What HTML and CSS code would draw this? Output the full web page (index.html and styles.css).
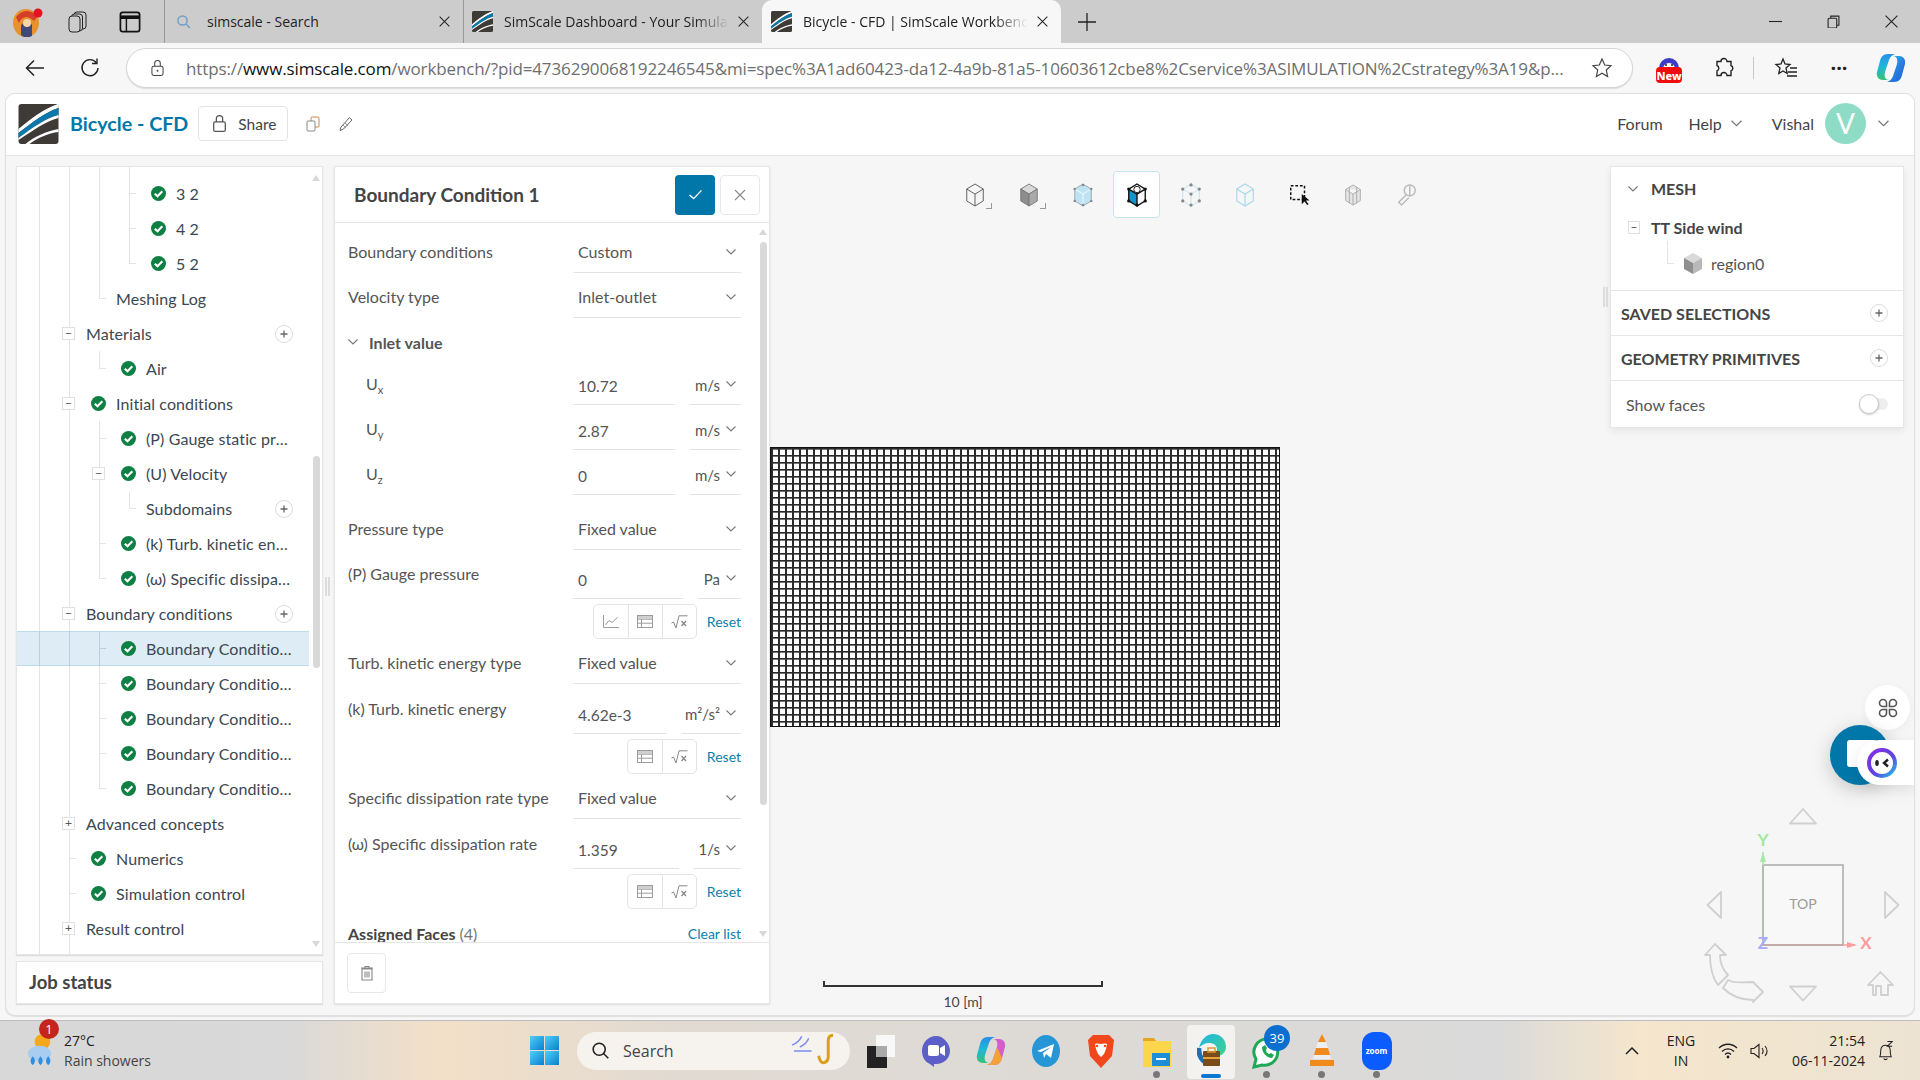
FILE: index.html
```html
<!DOCTYPE html>
<html lang="en">
<head>
<meta charset="utf-8">
<title>Bicycle - CFD | SimScale Workbench</title>
<link rel="stylesheet" href="styles.css">
</head>
<body>
<svg class="defs" aria-hidden="true">
  <defs>
    <linearGradient id="edgeG" x1="0" y1="0" x2="1" y2="1"><stop offset="0" stop-color="#1fb5e8"/><stop offset="1" stop-color="#3fd28b"/></linearGradient>
    <linearGradient id="copG" x1="0" y1="0" x2="1" y2="1"><stop offset="0" stop-color="#25c2d6"/><stop offset=".55" stop-color="#2a7de1"/><stop offset="1" stop-color="#1b5fd0"/></linearGradient>
    <linearGradient id="copG2" x1="0" y1="0" x2="0" y2="1"><stop offset="0" stop-color="#2a8fe8"/><stop offset=".5" stop-color="#1fb8d6"/><stop offset="1" stop-color="#38c172"/></linearGradient>
    <linearGradient id="ringG" x1="0" y1="0" x2="1" y2="1"><stop offset="0" stop-color="#8a2be2"/><stop offset=".6" stop-color="#5a48e0"/><stop offset="1" stop-color="#22c5e8"/></linearGradient>
    <linearGradient id="winG" x1="0" y1="0" x2="1" y2="1"><stop offset="0" stop-color="#4fd0f5"/><stop offset="1" stop-color="#0a7fd0"/></linearGradient>
    <symbol id="logo" viewBox="0 0 40 40">
      <rect width="40" height="40" rx="3" fill="#3e3a36"/>
      <path d="M40 0 C26 4 12 15 0 25 L0 29 C13 19 27 8 40 4Z" fill="#fff"/>
      <path d="M40 4 C27 8 13 19 0 29 L0 34 C14 24 27 14 40 11Z" fill="#0a78ab"/>
      <path d="M40 11 C27 14 14 24 0 34 L0 36 C14 27 27 17 40 14Z" fill="#fff"/>
      <path d="M40 25 C28 27 15 33 7 40 L11 40 C19 34 30 29 40 28Z" fill="#fff"/>
    </symbol>
    <symbol id="ck" viewBox="0 0 15 15">
      <circle cx="7.5" cy="7.5" r="7.5" fill="#0e8044"/>
      <path d="M3.8 7.8 6.5 10.3 11.3 5.3" fill="none" stroke="#fff" stroke-width="2.1"/>
    </symbol>
    <symbol id="chev" viewBox="0 0 10 6">
      <path d="M.5.5 5 5 9.5.5" fill="none" stroke="#777" stroke-width="1.1"/>
    </symbol>
    <symbol id="plusc" viewBox="0 0 18 18">
      <circle cx="9" cy="9" r="8.5" fill="#fff" stroke="#dcdcdc"/>
      <path d="M9 5.5v7M5.5 9h7" stroke="#666" stroke-width="1.3"/>
    </symbol>
    <symbol id="tbl" viewBox="0 0 16 13">
      <rect x=".5" y=".5" width="15" height="12" fill="none" stroke="#9c9c9c"/>
      <path d="M.5 4.2h15M.5 8.2h15M4.5.5v12" stroke="#9c9c9c"/>
      <rect x="1" y="1" width="14" height="3" fill="#cfcfcf"/>
    </symbol>
    <symbol id="sq" viewBox="0 0 17 14">
      <path d="M.5 8 2.5 7 5 13 8 .8H16.5" fill="none" stroke="#888"/>
      <path d="M10.5 6 15 11M15 6 10.5 11" stroke="#888" stroke-width="1.3"/>
    </symbol>
    <symbol id="xclose" viewBox="0 0 12 12">
      <path d="M.7.7 11.3 11.3M11.3.7.7 11.3" fill="none" stroke="#222" stroke-width="1.1"/>
    </symbol>
  </defs>
</svg>

<header class="tabstrip">
  <div class="strip-left">
    <svg class="avatar-profile" viewBox="0 0 31 30"><ellipse cx="14" cy="16" rx="13" ry="14" fill="#e8912f"/><path d="M4 10 C10 2 20 2 25 10 L22 14 C16 8 10 9 7 16Z" fill="#d63e2a"/><path d="M9 18 C12 14 18 14 20 18 L20 29 C16 31 12 31 9 28Z" fill="#3f4a7a"/><circle cx="15" cy="16" r="4" fill="#f6d3a8"/><circle cx="26" cy="6" r="4.5" fill="#e81123"/></svg>
    <svg class="strip-ico strip-ico-a" viewBox="0 0 22 24"><rect x="7" y="2" width="12" height="17" rx="3" fill="none" stroke="#222"/><rect x="4.5" y="4" width="11" height="17" rx="3" fill="#ccc" stroke="#222"/><rect x="2" y="6" width="11" height="16" rx="3" fill="#ccc" stroke="#222"/></svg>
    <svg class="strip-ico" viewBox="0 0 20 20"><rect x="2" y="2" width="16" height="16" rx="2" fill="none" stroke="#111" stroke-width="1.4"/><path d="M2 6h16" stroke="#111" stroke-width="3"/><path d="M7 6v12" stroke="#111" stroke-width="1.2"/></svg>
  </div>
  <div class="tab tab-search">
    <svg class="tab-ico" viewBox="0 0 16 16"><circle cx="6.5" cy="6.5" r="4.6" fill="none" stroke="#6f9fc9" stroke-width="1.5"/><path d="M10 10l4 4" stroke="#6f9fc9" stroke-width="1.5"/></svg>
    <span class="tab-text">simscale - Search</span>
    <svg class="tab-x"><use href="#xclose"/></svg>
  </div>
  <div class="tab tab-mid">
    <svg class="tab-logo"><use href="#logo"/></svg>
    <span class="tab-text tab-fade">SimScale Dashboard - Your Simulations</span>
    <svg class="tab-x"><use href="#xclose"/></svg>
  </div>
  <div class="tab tab-active">
    <svg class="tab-logo"><use href="#logo"/></svg>
    <span class="tab-text tab-fade">Bicycle - CFD | SimScale Workbench</span>
    <svg class="tab-x"><use href="#xclose"/></svg>
  </div>
  <svg class="tab-new" viewBox="0 0 20 20"><path d="M10 1v18M1 10h18" stroke="#222" stroke-width="1.3"/></svg>
  <div class="win-ctrl">
    <svg viewBox="0 0 12 12"><path d="M0 6h12" stroke="#222"/></svg>
    <svg viewBox="0 0 12 12"><rect x="1" y="3" width="8" height="9" rx="1" fill="none" stroke="#222"/><path d="M3.5 3V1h7.500v8.500H9" fill="none" stroke="#222"/></svg>
    <svg viewBox="0 0 12 12"><path d="M.5.5 11.500 11.500M11.500.5.500 11.500" stroke="#222"/></svg>
  </div>
</header>

<nav class="toolbar">
  <svg class="nav-ico nav-back" viewBox="0 0 22 22"><path d="M20 11H3M10 3.500 2.500 11 10 18.500" fill="none" stroke="#222" stroke-width="1.5"/></svg>
  <svg class="nav-ico nav-reload" viewBox="0 0 22 22"><path d="M17.500 6A8 8 0 1 0 19 11" fill="none" stroke="#222" stroke-width="1.400"/><path d="M18 1.500V6.500H13" fill="none" stroke="#222" stroke-width="1.400"/></svg>
  <div class="addr">
    <svg class="addr-lock" viewBox="0 0 14 18"><rect x="1" y="7" width="12" height="10" rx="2" fill="none" stroke="#444" stroke-width="1.100"/><path d="M4 7V4a3 3 0 0 1 6 0v3" fill="none" stroke="#444" stroke-width="1.100"/><circle cx="7" cy="12" r="1" fill="#444"/></svg>
    <span class="url"><span class="url-dim">https://</span><span class="url-host">www.simscale.com</span><span class="url-dim">/workbench/?pid=4736290068192246545&amp;mi=spec%3A1ad60423-da12-4a9b-81a5-10603612cbe8%2Cservice%3ASIMULATION%2Cstrategy%3A19&amp;p...</span></span>
    <svg class="addr-star" viewBox="0 0 22 22"><path d="M11 2l2.700 6 6.300.7-4.700 4.300 1.300 6.500L11 16.200 5.400 19.500l1.300-6.500L2 8.700 8.300 8z" fill="none" stroke="#444" stroke-width="1.200"/></svg>
  </div>
  <div class="ext-new">
    <svg viewBox="0 0 30 32"><path d="M5 16a10 10 0 0 1 20 0v2H5z" fill="#3b3bc8"/><path d="M9 17a6 6 0 0 1 12 0z" fill="#fff"/><circle cx="12" cy="13" r="1" fill="#222"/><circle cx="18" cy="13" r="1" fill="#222"/><rect x="2" y="15" width="26" height="16" rx="4" fill="#ee0c0c"/></svg>
    <span class="ext-new-label">New</span>
  </div>
  <svg class="nav-ico nav-puzzle" viewBox="0 0 22 22"><path d="M8 4.500a3 3 0 0 1 6 0H18v4a3 3 0 0 1 0 5.500v4.500H14a3 3 0 0 0-6 0H4V14a3 3 0 0 0 0-5.500v-4z" fill="none" stroke="#222" stroke-width="1.400"/></svg>
  <span class="nav-sep"></span>
  <svg class="nav-ico nav-fav" viewBox="0 0 24 22"><path d="M9 2l2 5 5 .5-4 3.500 1.200 5.500L9 14 4.800 16.500 6 11 2 7.500 7 7z" fill="none" stroke="#222" stroke-width="1.300"/><path d="M16 11h7M14 15h9M13 19h10" stroke="#222" stroke-width="1.300"/></svg>
  <span class="nav-dots">···</span>
  <svg class="nav-cop" viewBox="0 0 30 32"><path d="M12 2C7 2 5 5 4 9L1 20C0 25 3 28 7 28H13C9 28 8 24 9 20L13 8C14 5 16 3 19 2Z" fill="url(#copG2)"/><path d="M18 30C23 30 25 27 26 23L29 12C30 7 27 4 23 4H17C21 4 22 8 21 12L17 24C16 27 14 29 11 30Z" fill="url(#copG)"/></svg>
</nav>

<div class="app">
  <div class="app-head">
    <svg class="app-logo"><use href="#logo"/></svg>
    <span class="app-title">Bicycle - CFD</span>
    <button class="share">
      <svg class="share-lock" viewBox="0 0 14 18"><rect x="1.500" y="7.500" width="11" height="9" rx="1.500" fill="none" stroke="#555" stroke-width="1.200"/><path d="M4 7.500V4.500a3 3 0 0 1 6 0v3" fill="none" stroke="#555" stroke-width="1.200"/></svg>
      Share
    </button>
    <svg class="head-ico head-copy" viewBox="0 0 14 16"><rect x="5" y="1" width="8" height="10" rx="1" fill="#fff" stroke="#c98a4e"/><rect x="1" y="5" width="8" height="10" rx="1" fill="#fff" stroke="#888"/></svg>
    <svg class="head-ico head-pen" viewBox="0 0 14 16"><path d="M10.500 1.500 13 4 4.500 13 1 14.500 2 11z" fill="#fff" stroke="#666"/><path d="M4 9l3 3M6 7l3 3" stroke="#999"/></svg>
    <nav class="head-right">
      <span class="hlink hlink-forum">Forum</span>
      <span class="hlink hlink-help">Help</span>
      <svg class="hchev"><use href="#chev"/></svg>
      <span class="hlink hlink-user">Vishal</span>
      <span class="uavatar">V</span>
      <svg class="hchev hchev-end"><use href="#chev"/></svg>
    </nav>
  </div>

  <div class="work">
    <aside class="side">
      <div class="treebox">
        <div class="tree">
          <div class="row row-space"><i class="g"></i><i class="g"></i><i class="g"></i><i class="g"></i></div>
          <div class="row"><i class="g"></i><i class="g"></i><i class="g"></i><i class="g last tick"></i><svg class="ck"><use href="#ck"/></svg><span class="t">3 2</span></div>
          <div class="row"><i class="g"></i><i class="g"></i><i class="g"></i><i class="g last tick"></i><svg class="ck"><use href="#ck"/></svg><span class="t">4 2</span></div>
          <div class="row"><i class="g"></i><i class="g"></i><i class="g"></i><i class="g last end"></i><svg class="ck"><use href="#ck"/></svg><span class="t">5 2</span></div>
          <div class="row"><i class="g"></i><i class="g"></i><i class="g last end"></i><span class="t">Meshing Log</span></div>
          <div class="row"><i class="g"></i><i class="g last"><b class="box">−</b></i><span class="t">Materials</span><svg class="plusc"><use href="#plusc"/></svg></div>
          <div class="row"><i class="g"></i><i class="g"></i><i class="g last end"></i><svg class="ck"><use href="#ck"/></svg><span class="t">Air</span></div>
          <div class="row"><i class="g"></i><i class="g last"><b class="box">−</b></i><svg class="ck"><use href="#ck"/></svg><span class="t">Initial conditions</span></div>
          <div class="row"><i class="g"></i><i class="g"></i><i class="g last tick"></i><svg class="ck"><use href="#ck"/></svg><span class="t">(P) Gauge static pressure</span></div>
          <div class="row"><i class="g"></i><i class="g"></i><i class="g last"><b class="box">−</b></i><svg class="ck"><use href="#ck"/></svg><span class="t">(U) Velocity</span></div>
          <div class="row"><i class="g"></i><i class="g"></i><i class="g"></i><i class="g last end"></i><span class="t">Subdomains</span><svg class="plusc"><use href="#plusc"/></svg></div>
          <div class="row"><i class="g"></i><i class="g"></i><i class="g last tick"></i><svg class="ck"><use href="#ck"/></svg><span class="t">(k) Turb. kinetic energy</span></div>
          <div class="row"><i class="g"></i><i class="g"></i><i class="g last end"></i><svg class="ck"><use href="#ck"/></svg><span class="t">(ω) Specific dissipation rate</span></div>
          <div class="row"><i class="g"></i><i class="g last"><b class="box">−</b></i><span class="t">Boundary conditions</span><svg class="plusc"><use href="#plusc"/></svg></div>
          <div class="row row-sel"><i class="g"></i><i class="g"></i><i class="g last tick"></i><svg class="ck"><use href="#ck"/></svg><span class="t">Boundary Condition 1</span></div>
          <div class="row"><i class="g"></i><i class="g"></i><i class="g last tick"></i><svg class="ck"><use href="#ck"/></svg><span class="t">Boundary Condition 2</span></div>
          <div class="row"><i class="g"></i><i class="g"></i><i class="g last tick"></i><svg class="ck"><use href="#ck"/></svg><span class="t">Boundary Condition 3</span></div>
          <div class="row"><i class="g"></i><i class="g"></i><i class="g last tick"></i><svg class="ck"><use href="#ck"/></svg><span class="t">Boundary Condition 4</span></div>
          <div class="row"><i class="g"></i><i class="g"></i><i class="g last end"></i><svg class="ck"><use href="#ck"/></svg><span class="t">Boundary Condition 5</span></div>
          <div class="row"><i class="g"></i><i class="g last"><b class="box">+</b></i><span class="t">Advanced concepts</span></div>
          <div class="row"><i class="g"></i><i class="g last tick"></i><svg class="ck"><use href="#ck"/></svg><span class="t">Numerics</span></div>
          <div class="row"><i class="g"></i><i class="g last tick"></i><svg class="ck"><use href="#ck"/></svg><span class="t">Simulation control</span></div>
          <div class="row"><i class="g"></i><i class="g last"><b class="box">+</b></i><span class="t">Result control</span></div>
          <div class="row row-space"><i class="g"></i><i class="g"></i></div>
        </div>
        <span class="sb-arrow sb-up"></span>
        <span class="sb-thumb sb-thumb-tree"></span>
        <span class="sb-arrow sb-down"></span>
      </div>
      <div class="job">Job status</div>
    </aside>

    <span class="handle handle-left"></span>

    <section class="panel">
      <div class="panel-head">
        <h1 class="panel-title">Boundary Condition 1</h1>
        <button class="btn-ok"><svg viewBox="0 0 16 12"><path d="M1.500 6.500 6 10.500 14.500 1.500" fill="none" stroke="#fff" stroke-width="1.500"/></svg></button>
        <button class="btn-x"><svg viewBox="0 0 12 12"><path d="M1 1 11 11M11 1 1 11" stroke="#888" stroke-width="1.100"/></svg></button>
      </div>
      <div class="form">
        <div class="frow"><label class="lbl">Boundary conditions</label><div class="sel"><span>Custom</span><svg class="ch"><use href="#chev"/></svg></div></div>
        <div class="frow"><label class="lbl">Velocity type</label><div class="sel"><span>Inlet-outlet</span><svg class="ch"><use href="#chev"/></svg></div></div>
        <div class="fgroup"><svg class="ch ch-group"><use href="#chev"/></svg>Inlet value</div>
        <div class="frow"><label class="lbl lbl-sub">U<sub>x</sub></label><div class="val val-m"><span>10.72</span></div><div class="unit unit-m">m/s<svg class="ch"><use href="#chev"/></svg></div></div>
        <div class="frow"><label class="lbl lbl-sub">U<sub>y</sub></label><div class="val val-m"><span>2.87</span></div><div class="unit unit-m">m/s<svg class="ch"><use href="#chev"/></svg></div></div>
        <div class="frow frow-gap"><label class="lbl lbl-sub">U<sub>z</sub></label><div class="val val-m"><span>0</span></div><div class="unit unit-m">m/s<svg class="ch"><use href="#chev"/></svg></div></div>
        <div class="frow frow-gap15"><label class="lbl">Pressure type</label><div class="sel"><span>Fixed value</span><svg class="ch"><use href="#chev"/></svg></div></div>
        <div class="frow frow-tight"><label class="lbl lbl-top">(P) Gauge pressure</label><div class="val"><span>0</span></div><div class="unit unit-pa">Pa<svg class="ch"><use href="#chev"/></svg></div></div>
        <div class="tools">
          <div class="tgroup">
            <span class="tbtn"><svg class="tchart" viewBox="0 0 16 13"><path d="M.5 0v12.500H16" fill="none" stroke="#9c9c9c"/><path d="M2.500 10 6 5.500 9 7.500 14.500 2.500" fill="none" stroke="#9c9c9c"/></svg></span>
            <span class="tbtn"><svg class="ttbl"><use href="#tbl"/></svg></span>
            <span class="tbtn"><svg class="tsq"><use href="#sq"/></svg></span>
          </div>
          <a class="reset">Reset</a>
        </div>
        <div class="frow"><label class="lbl">Turb. kinetic energy type</label><div class="sel"><span>Fixed value</span><svg class="ch"><use href="#chev"/></svg></div></div>
        <div class="frow frow-tight frow-pre"><label class="lbl lbl-top">(k) Turb. kinetic energy</label><div class="val"><span>4.62e-3</span></div><div class="unit unit-k">m²/s²<svg class="ch"><use href="#chev"/></svg></div></div>
        <div class="tools">
          <div class="tgroup">
            <span class="tbtn"><svg class="ttbl"><use href="#tbl"/></svg></span>
            <span class="tbtn"><svg class="tsq"><use href="#sq"/></svg></span>
          </div>
          <a class="reset">Reset</a>
        </div>
        <div class="frow"><label class="lbl">Specific dissipation rate type</label><div class="sel"><span>Fixed value</span><svg class="ch"><use href="#chev"/></svg></div></div>
        <div class="frow frow-tight frow-pre"><label class="lbl lbl-top">(ω) Specific dissipation rate</label><div class="val"><span>1.359</span></div><div class="unit unit-w">1/s<svg class="ch"><use href="#chev"/></svg></div></div>
        <div class="tools">
          <div class="tgroup">
            <span class="tbtn"><svg class="ttbl"><use href="#tbl"/></svg></span>
            <span class="tbtn"><svg class="tsq"><use href="#sq"/></svg></span>
          </div>
          <a class="reset">Reset</a>
        </div>
        <div class="assigned"><b>Assigned Faces</b> <span class="count">(4)</span><a class="clear">Clear list</a></div>
        <span class="sb-arrow sb-up sb-up-form"></span>
        <span class="sb-thumb sb-thumb-form"></span>
        <span class="sb-arrow sb-down sb-down-form"></span>
      </div>
      <div class="panel-foot">
        <button class="trash"><svg viewBox="0 0 14 16"><path d="M2 4h10v11H2zM1 3h12M5 3V1.500h4V3M5 6.500v6M7 6.500v6M9 6.500v6" fill="none" stroke="#888" stroke-width="1.100"/></svg></button>
      </div>
    </section>

    <main class="view">
      <div class="vtools">
        <span class="vt vt-corner"><svg viewBox="0 0 24 26"><path d="M12 1 21 6.500V19.500L12 25 3 19.500V6.500Z M3 6.500 12 12 21 6.500M12 12V25" fill="none" stroke="#555"/></svg></span>
        <span class="vt vt-corner"><svg viewBox="0 0 24 26"><path d="M12 1 21 6.500 12 12 3 6.500Z" fill="#d8d8d8" stroke="#777"/><path d="M3 6.500 12 12V25L3 19.500Z" fill="#8d8d8d" stroke="#777"/><path d="M21 6.500 12 12V25L21 19.500Z" fill="#a9a9a9" stroke="#777"/></svg></span>
        <span class="vt"><svg viewBox="0 0 24 26"><path d="M12 1 21 6.500V19.500L12 25 3 19.500V6.500Z" fill="#bfe3f3" stroke="#9aa4aa"/><path d="M3 6.500 12 12 21 6.500M12 12V25" fill="none" stroke="#e8f5fb" stroke-width="1.300"/><g fill="#808a90"><circle cx="12" cy="2" r="1.400"/><circle cx="21" cy="6.500" r="1.400"/><circle cx="21" cy="19.500" r="1.400"/><circle cx="12" cy="24" r="1.400"/><circle cx="3" cy="19.500" r="1.400"/><circle cx="3" cy="6.500" r="1.400"/></g></svg></span>
        <span class="vt vt-on"><svg viewBox="0 0 24 26"><path d="M3 6.500 12 12V25L3 19.500Z" fill="#1493cc"/><path d="M12 1 21 6.500V19.500L12 25 3 19.500V6.500Z" fill="none" stroke="#111" stroke-width="1.500"/><path d="M3 6.500 12 12 21 6.500M12 12V25" fill="none" stroke="#111" stroke-width="1.500"/><circle cx="12" cy="7" r="3.500" fill="#fff" stroke="#111"/><g fill="#111"><circle cx="3" cy="6.500" r="1.800"/><circle cx="21" cy="6.500" r="1.800"/><circle cx="21" cy="19.500" r="1.800"/><circle cx="3" cy="19.500" r="1.800"/><circle cx="12" cy="24" r="1.800"/></g></svg></span>
        <span class="vt"><svg viewBox="0 0 24 26"><path d="M12 1 21 6.500V19.500L12 25 3 19.500V6.500Z M3 6.500 12 12 21 6.500M12 12V25" fill="none" stroke="#bfe3f3"/><g fill="#888"><circle cx="12" cy="2" r="1.800"/><circle cx="21" cy="6.500" r="1.800"/><circle cx="21" cy="19.500" r="1.800"/><circle cx="12" cy="24" r="1.800"/><circle cx="3" cy="19.500" r="1.800"/><circle cx="3" cy="6.500" r="1.800"/><circle cx="12" cy="12" r="1.800"/></g></svg></span>
        <span class="vt"><svg viewBox="0 0 24 26"><path d="M12 1 21 6.500V19.500L12 25 3 19.500V6.500Z M3 6.500 12 12 21 6.500M12 12V25" fill="none" stroke="#a9d8ee" stroke-width="1.300"/></svg></span>
        <span class="vt"><svg viewBox="0 0 24 26"><rect x="3" y="3" width="15" height="15" fill="none" stroke="#111" stroke-width="1.600" stroke-dasharray="3 2"/><path d="M15 12v11l3-3 3 4 1.500-1-3-4h4z" fill="#111"/></svg></span>
        <span class="vt"><svg viewBox="0 0 24 26"><path d="M12 2 20 7V19L12 24 4 19V7Z M4 7 12 12 20 7M12 12V24M8 4.500V22M16 4.500V22" fill="#e5e5e5" stroke="#aaa"/></svg></span>
        <span class="vt"><svg viewBox="0 0 24 26"><circle cx="15" cy="8" r="6" fill="none" stroke="#bbb" stroke-width="1.600"/><path d="M15 2V14M11 13 3 21 6 24 14 16" fill="none" stroke="#bbb" stroke-width="1.600"/></svg></span>
      </div>
      <div class="mesh"></div>
      <div class="scale"><span class="scale-bar"></span><span class="scale-label">10 [m]</span></div>
    </main>

    <span class="handle handle-right"></span>

    <aside class="rpanel">
      <div class="rsec rsec-mesh">
        <div class="rmesh-head"><svg class="ch ch-mesh"><use href="#chev"/></svg>MESH</div>
        <div class="rtree-row"><span class="rbox">−</span><b>TT Side wind</b></div>
        <div class="rtree-leaf"><svg class="rcube" viewBox="0 0 18 21"><path d="M9 0 18 5 9 10 0 5Z" fill="#d9d9d9"/><path d="M0 5 9 10V21L0 16Z" fill="#8f8f8f"/><path d="M18 5 9 10V21L18 16Z" fill="#b9b9b9"/></svg>region0</div>
      </div>
      <div class="rsec rsec-row"><span class="rhead">SAVED SELECTIONS</span><svg class="plusc"><use href="#plusc"/></svg></div>
      <div class="rsec rsec-row"><span class="rhead">GEOMETRY PRIMITIVES</span><svg class="plusc"><use href="#plusc"/></svg></div>
      <div class="rsec rsec-row rsec-last"><span class="rfaces">Show faces</span><span class="switch"><span class="knob"></span></span></div>
    </aside>

    <svg class="navcube" viewBox="0 0 200 210">
      <g fill="none" stroke="#d0d0d0" stroke-width="1.800" stroke-linejoin="round">
        <path d="M90 23.500 103 9 116 23.500Z"/>
        <path d="M90 186.500 103 200.500 116 186.500Z"/>
        <path d="M21 92 7.500 105 21 118Z"/>
        <path d="M185 92 198.500 105 185 118Z"/>
        <path d="M15 144 26 155H20C20 163 23 170 28 175L18 185C12 177 10 166 10 155H5Z"/>
        <path d="M23 188 28 180C35 184 44 182 53 182V182L63 192 53 202V200C42 200 31 196 23 188Z"/>
        <path d="M180.500 172 193 185H188V195H181V186H176V195H173V185H168Z"/>
      </g>
      <path d="M63 65 H143 V145 H63Z" fill="#f8f8f8" stroke="#a9a9a9" stroke-width="1.500"/>
      <path d="M63 65 V145" stroke="#a9c4a9" stroke-width="1.500"/>
      <path d="M63 145 H143" stroke="#c9a4a4" stroke-width="1.500"/>
      <path d="M63 65 V52" stroke="#a6e8a6" stroke-width="1.500"/>
      <path d="M60 62 63 52 66 62Z" fill="#a6e8a6"/>
      <path d="M143 145 H155" stroke="#ff9d9d" stroke-width="1.500"/>
      <path d="M147 142 157 145 147 148Z" fill="#ff9d9d"/>
      <text x="103" y="109" text-anchor="middle" class="nc-top">TOP</text>
      <text x="63" y="46" text-anchor="middle" class="nc-axis nc-y">Y</text>
      <text x="166" y="149" text-anchor="middle" class="nc-axis nc-x">X</text>
      <text x="63" y="149" text-anchor="middle" class="nc-axis nc-z">Z</text>
    </svg>

    <div class="chat">
      <span class="chat-apps"><svg viewBox="0 0 20 20"><g fill="none" stroke="#555" stroke-width="1.600"><path d="M5 1.500a3.500 3.500 0 0 1 3.500 3.500V8.500H5A3.500 3.500 0 0 1 5 1.500Z"/><path d="M15 1.500a3.500 3.500 0 0 0-3.500 3.500V8.500H15A3.500 3.500 0 0 0 15 1.500Z"/><path d="M5 18.500A3.500 3.500 0 0 0 8.500 15V11.500H5A3.500 3.500 0 0 0 5 18.500Z"/><path d="M15 18.500A3.500 3.500 0 0 1 11.500 15V11.500H15A3.500 3.500 0 0 1 15 18.500Z"/></g></svg></span>
      <span class="chat-blue"><span class="chat-bubble"></span></span>
      <span class="chat-pill"><svg viewBox="0 0 30 30"><circle cx="15" cy="15" r="13" fill="#fff" stroke="url(#ringG)" stroke-width="4"/><ellipse cx="10" cy="15" rx="1.800" ry="3" fill="#222"/><path d="M21 11.500 17 15 21 18.500" fill="none" stroke="#222" stroke-width="2.400"/></svg></span>
    </div>
  </div>
</div>

<footer class="taskbar">
  <div class="tb-weather">
    <svg class="wx" viewBox="0 0 30 38"><circle cx="17" cy="10" r="8" fill="#f5a81c"/><ellipse cx="14" cy="22" rx="12" ry="8" fill="#a8cdf0"/><path d="M7 25c3 3 3 7 0 9-3-2-3-6 0-9ZM15 25c3 3 3 7 0 9-3-2-3-6 0-9ZM23 25c3 3 3 7 0 9-3-2-3-6 0-9Z" fill="#2f8fe0"/></svg>
    <span class="wx-badge">1</span>
    <div class="wx-text"><span>27°C</span><span class="wx-sub">Rain showers</span></div>
  </div>
  <div class="tb-center">
    <svg class="tb-win" viewBox="0 0 29 29"><g fill="url(#winG)"><rect width="14" height="14"/><rect x="15" width="14" height="14"/><rect y="15" width="14" height="14"/><rect x="15" y="15" width="14" height="14"/></g></svg>
    <div class="tb-search">
      <svg class="tb-search-ico" viewBox="0 0 22 22"><circle cx="9.500" cy="9.500" r="7" fill="none" stroke="#222" stroke-width="1.800"/><path d="M14.500 14.500 20 20" stroke="#222" stroke-width="1.800"/></svg>
      <span class="tb-search-text">Search</span>
      <svg class="tb-sax" viewBox="0 0 50 36"><path d="M2 12c5-2 8-5 10-9M10 14c4-2 8-6 9-9M4 18h18" fill="none" stroke="#7a8cf0" stroke-width="1.500"/><path d="M44 2c-4 0-5 3-5 6v16c0 5-5 8-8 4l-2-5" fill="none" stroke="#d9a01e" stroke-width="3"/></svg>
    </div>
    <svg class="tb-ico tb-tv" viewBox="0 0 30 36"><rect x="10" y="2" width="19" height="22" fill="#f8f8f8"/><rect x="1" y="13" width="20" height="22" fill="#222"/><rect x="10" y="13" width="11" height="11" fill="#aaa"/></svg>
    <svg class="tb-ico" viewBox="0 0 30 34"><path d="M15 2C7 2 1 9 1 17c0 6 3 11 8 13l4 3v-3h2c8 0 14-6 14-13S23 2 15 2Z" fill="#5b5fc7"/><rect x="7" y="11" width="11" height="11" rx="2" fill="#fff"/><path d="M19 14l5-3v11l-5-3z" fill="#fff"/></svg>
    <svg class="tb-ico" viewBox="0 0 30 32"><path d="M12 2C7 2 5 5 4 9L1 20C0 25 3 28 7 28H13C9 28 8 24 9 20L13 8C14 5 16 3 19 2Z" fill="url(#copG2)"/><path d="M18 30C23 30 25 27 26 23L29 12C30 7 27 4 23 4H17C21 4 22 8 21 12L17 24C16 27 14 29 11 30Z" fill="#d25fc9"/><path d="M21 12 17 24C16 27 14 29 11 30H18C23 30 25 27 26 23Z" fill="#f4a13a"/></svg>
    <svg class="tb-ico" viewBox="0 0 30 34"><ellipse cx="15" cy="17" rx="14" ry="16" fill="#2696d6"/><path d="M6 17 23 10 20 24 15 20 13 24 12 19 20 13 10 18Z" fill="#fff"/></svg>
    <svg class="tb-ico tb-ico-last" viewBox="0 0 30 36"><path d="M7 2h16l5 5-2 16-11 12L4 23 2 7Z" fill="#f1471c"/><path d="M9 11c3-1 4 0 6 0s3-1 6 0l-1 5-2 5-3 3-3-3-2-5z" fill="#fff"/><circle cx="11" cy="13" r="1.200" fill="#f1471c"/><circle cx="19" cy="13" r="1.200" fill="#f1471c"/></svg>
    <span class="tb-slot"><svg class="tb-ico" viewBox="0 0 30 36"><path d="M1 5h11l2 3H1z" fill="#e0a81e"/><rect x="1" y="8" width="28" height="26" fill="#fbd64a"/><rect x="10" y="20" width="18" height="13" fill="#1f8ed9"/><path d="M14 26h10" stroke="#fff" stroke-width="2"/></svg><i class="dot"></i></span>
    <span class="tb-slot tb-slot-on"><svg class="tb-ico" viewBox="0 0 30 36"><path d="M2 15C4 6 10 1 16 1c8 0 13 6 13 13 0 6-5 9-9 9-2 0-4-1-5-2 3 0 5-2 5-5 0-4-4-6-8-6-4 0-8 2-10 5Z" fill="url(#edgeG)"/><path d="M2 15c-1 8 4 14 10 16" fill="none" stroke="#1a6fb8" stroke-width="5"/><rect x="6" y="18" width="17" height="15" rx="1" fill="#7b4a1a"/><rect x="11" y="15" width="7" height="4" fill="none" stroke="#e29a2d" stroke-width="1.500"/><rect x="6" y="24" width="17" height="2" fill="#e8a63a"/></svg><i class="bar"></i></span>
    <span class="tb-slot"><svg class="tb-ico" viewBox="0 0 30 36"><path d="M15 6a13 13 0 0 0-11 20L2 34l8-2a13 13 0 1 0 5-26Z" fill="#fff" stroke="#1fa855" stroke-width="3"/><path d="M10 14c0 6 5 11 10 11l2-3-3-2-2 1c-2-1-3-2-3-4l1-2-2-3z" fill="#1fa855"/></svg><i class="dot"></i><span class="wa-badge">39</span></span>
    <span class="tb-slot"><svg class="tb-ico" viewBox="0 0 30 36"><path d="M15 1l4 8h-8z" fill="#f18a1c"/><path d="M11 9h8l2 6H9z" fill="#eee"/><path d="M9 15h12l2 7H7z" fill="#f18a1c"/><path d="M7 22h16l1 4H6z" fill="#eee"/><path d="M3 27h24v6H3z" fill="#f18a1c"/></svg><i class="dot"></i></span>
    <span class="tb-slot"><span class="zoomapp">zoom</span><i class="dot"></i></span>
  </div>
  <div class="tb-tray">
    <svg class="tray-chev" viewBox="0 0 14 8"><path d="M1 7 7 1l6 6" fill="none" stroke="#222" stroke-width="1.500"/></svg>
    <div class="tray-lang"><span>ENG</span><span>IN</span></div>
    <svg class="tray-wifi" viewBox="0 0 20 16"><path d="M1 5c5-5 13-5 18 0M4 8.500c3.500-3.500 8.500-3.500 12 0M7 11.500c2-2 4-2 6 0" fill="none" stroke="#222" stroke-width="1.300"/><circle cx="10" cy="14" r="1.400" fill="#222"/></svg>
    <svg class="tray-vol" viewBox="0 0 20 16"><path d="M1 5.500h3L9 1.500v13L4 10.500H1Z" fill="none" stroke="#222" stroke-width="1.100"/><path d="M12 5c1.500 2 1.500 4 0 6M15 3c2.500 3 2.500 7 0 10" fill="none" stroke="#222" stroke-width="1.100"/></svg>
    <div class="tray-time"><span>21:54</span><span>06-11-2024</span></div>
    <svg class="tray-bell" viewBox="0 0 18 22"><path d="M3 17c1-2 1-4 1-7 0-3 2-5 5-5 3 0 5 2 5 5 0 3 0 5 1 7Z" fill="none" stroke="#222" stroke-width="1.100"/><path d="M7 19c1 1.500 3 1.500 4 0" fill="none" stroke="#222" stroke-width="1.100"/><path d="M11 1h5l-5 5h5" fill="none" stroke="#222" stroke-width="1.100"/></svg>
  </div>
</footer>
</body>
</html>
```
FILE: styles.css
```css
* { box-sizing: border-box; }
html, body { margin: 0; height: 100%; }
body {
  width: 1920px; height: 1080px; overflow: hidden;
  display: flex; flex-direction: column;
  background: #f7f7f7;
  font-family: Lato, "Open Sans", sans-serif;
  font-size: 16px; color: #444;
}
.defs { position: absolute; width: 0; height: 0; }
svg { display: block; flex: none; }
button { font: inherit; color: inherit; background: none; border: 0; padding: 0; }

/* ---------- browser tab strip ---------- */
.tabstrip { height: 43px; flex: none; background: #cccccc; display: flex; align-items: stretch; font-family: "Open Sans", sans-serif; font-size: 14px; color: #222; }
.strip-left { width: 164px; display: flex; align-items: center; padding-left: 12px; }
.avatar-profile { width: 31px; height: 30px; margin-right: 23px; }
.strip-ico { width: 24px; height: 24px; }
.strip-ico-a { margin-right: 28px; }
.tab { width: 299px; display: flex; align-items: center; border-left: 1px solid #999; background-clip: padding-box; }
.tab-search { padding-left: 11px; }
.tab-ico { width: 16px; height: 16px; margin-right: 15px; }
.tab-mid { padding-left: 8px; }
.tab-logo { width: 21px; height: 21px; margin-right: 11px; }
.tab-text { flex: 1; white-space: nowrap; overflow: hidden; }
.tab-fade { -webkit-mask-image: linear-gradient(90deg, #000 85%, transparent); mask-image: linear-gradient(90deg, #000 85%, transparent); }
.tab-x { width: 11px; height: 11px; margin: 0 13px 0 9px; }
.tab-active { background: #f7f7f7; border: 0; border-radius: 10px 10px 0 0; padding-left: 9px; height: 43px; margin-top: 0; }
.tab-new { width: 20px; height: 20px; align-self: center; margin-left: 16px; }
.win-ctrl { margin-left: auto; display: flex; align-items: center; gap: 45px; padding-right: 22px; }
.win-ctrl svg { width: 13px; height: 13px; }

/* ---------- browser toolbar ---------- */
.toolbar { height: 50px; flex: none; background: #f7f7f7; display: flex; align-items: center; font-family: "Open Sans", sans-serif; }
.nav-ico { width: 22px; height: 22px; }
.nav-back { margin-left: 24px; }
.nav-reload { margin-left: 33px; }
.addr { margin-left: 25px; width: 1507px; height: 40px; background: #fff; border: 1px solid #d6d6d6; border-radius: 20px; display: flex; align-items: center; padding-left: 24px; box-shadow: 0 1px 1px #ddd; }
.addr-lock { width: 13px; height: 18px; margin-right: 22px; }
.url { font-size: 17px; white-space: nowrap; width: 1380px; color: #6e6e6e; letter-spacing: -0.12px; }
.url-host { color: #111; }
.addr-star { width: 22px; height: 22px; margin-left: 25px; }
.ext-new { margin-left: 21px; width: 30px; height: 32px; position: relative; }
.ext-new svg { width: 30px; height: 32px; }
.ext-new-label { position: absolute; left: 2px; width: 26px; bottom: 1px; text-align: center; color: #fff; font: 800 11px/15px "Noto Sans", sans-serif; }
.nav-puzzle { margin-left: 29px; }
.nav-sep { width: 1px; height: 22px; background: #c8c8c8; margin-left: 18px; }
.nav-fav { margin-left: 20px; width: 24px; }
.nav-dots { margin-left: 31px; width: 20px; text-align: center; font: 700 20px/20px "Open Sans", sans-serif; color: #222; }
.nav-cop { margin-left: 27px; width: 30px; height: 32px; }

/* ---------- app card ---------- */
.app { height: 923px; flex: none; margin: 0 5px; background: #f6f6f6; border: 1px solid #e0e0e0; border-radius: 10px; display: flex; flex-direction: column; overflow: hidden; box-shadow: 0 1px 1px #ddd; }
.app-head { height: 62px; flex: none; background: #fff; border-bottom: 1px solid #e4e4e4; display: flex; align-items: center; padding: 0 0 2px 12px; }
.app-logo { width: 41px; height: 40px; }
.app-title { margin-left: 11px; font-size: 19.700px; font-weight: 700; color: #0077a8; white-space: nowrap; }
.share { margin-left: 10px; width: 90px; height: 35px; border: 1px solid #e4e4e4; border-radius: 4px; background: #fff; display: flex; align-items: center; padding-left: 13px; gap: 11px; font-size: 15.500px; color: #444; }
.share-lock { width: 15px; height: 19px; }
.head-ico { width: 14px; height: 16px; }
.head-copy { margin-left: 18px; }
.head-pen { margin-left: 19px; }
.head-right { margin-left: auto; display: flex; align-items: center; padding-right: 25px; }
.hlink { font-size: 16px; color: #444; }
.hlink-help { margin-left: 26px; }
.hchev { width: 11px; height: 7px; margin-left: 9px; }
.hlink-user { margin-left: 30px; }
.uavatar { width: 41px; height: 41px; border-radius: 50%; background: #8edcc6; color: #fff; font-size: 28px; line-height: 41px; text-align: center; margin-left: 11px; }
.hchev-end { margin-left: 12px; }

/* ---------- workspace ---------- */
.work { flex: 1; min-height: 0; display: flex; padding: 10px 10px 11px; position: relative; }
.side { width: 307px; flex: none; display: flex; flex-direction: column; gap: 6px; margin-right: 11px; }
.treebox { flex: 1; min-height: 0; position: relative; background: #fff; border: 1px solid #e6e6e6; overflow: hidden; box-shadow: 0 1px 1px #ddd; }
.tree { width: 292px; color: #3c4751; letter-spacing: .1px; }
.row { height: 35px; display: flex; align-items: center; padding: 0 16px 0 22px; }
.row-space { height: 9px; }
.row-space:last-child { height: 20px; }
.row-sel { background: #deedf5; box-shadow: inset 0 1px 0 #bcdcec, inset 0 -1px 0 #bcdcec; }
.row-sel .g { border-left-color: #b7d0de; }
.g { width: 30px; height: 100%; flex: none; border-left: 1px solid #e4e4e4; position: relative; display: block; font-style: normal; }
.g.last { width: 17px; }
.g.tick::after, .g.end::after { content: ""; position: absolute; left: 0; top: 17px; width: 6px; height: 1px; background: #e4e4e4; }
.g.end { border-left-color: transparent; }
.g.end::before { content: ""; position: absolute; left: -1px; top: 0; width: 1px; height: 18px; background: #e4e4e4; }
.row-sel .g.tick::after { background: #b7d0de; }
.box { position: absolute; left: -8px; top: 11px; width: 13px; height: 13px; border: 1px solid #e0e0e0; background: #fff; font: 400 12px/10px Lato, sans-serif; color: #555; text-align: center; letter-spacing: 0; }
.ck { width: 15px; height: 15px; margin: 0 10px 0 5px; }
.t { flex: 1; min-width: 0; white-space: nowrap; overflow: hidden; text-overflow: ellipsis; }
.plusc { width: 18px; height: 18px; flex: none; }
.sb-arrow { position: absolute; left: 295px; width: 0; height: 0; border-left: 4px solid transparent; border-right: 4px solid transparent; }
.sb-up { top: 8px; border-bottom: 6px solid #d8d8d8; }
.sb-down { bottom: 7px; border-top: 6px solid #d8d8d8; }
.sb-thumb { position: absolute; width: 7px; background: #d9d9d9; border-radius: 4px; }
.sb-thumb-tree { left: 296px; top: 289px; height: 212px; }
.job { height: 43px; flex: none; background: #fff; border: 1px solid #e6e6e6; padding-left: 12px; font-size: 18.500px; font-weight: 700; line-height: 41px; color: #444; box-shadow: 0 1px 1px #ddd; }
.handle { position: absolute; width: 5px; height: 19px; border-left: 2px solid #dcdcdc; border-right: 2px solid #dcdcdc; }
.handle-left { left: 319px; top: 421px; }
.handle-right { left: 1597px; top: 131px; height: 20px; }

/* ---------- boundary condition panel ---------- */
.panel { width: 436px; flex: none; background: #fff; border: 1px solid #e6e6e6; display: flex; flex-direction: column; box-shadow: 0 1px 2px #ddd; }
.panel-head { height: 56px; flex: none; border-bottom: 1px solid #e6e6e6; display: flex; align-items: center; padding: 0 9px 0 19px; }
.panel-title { flex: 1; margin: 0; font-size: 19px; font-weight: 700; color: #444; }
.btn-ok { width: 40px; height: 40px; background: #0077a8; border-radius: 4px; display: flex; align-items: center; justify-content: center; }
.btn-ok svg { width: 15px; height: 11px; }
.btn-x { width: 40px; height: 40px; border: 1px solid #e8e8e8; border-radius: 4px; margin-left: 5px; display: flex; align-items: center; justify-content: center; }
.btn-x svg { width: 12px; height: 12px; }
.form { flex: 1; min-height: 0; position: relative; overflow: hidden; padding: 15px 28px 0 13px; color: #555; }
.frow { display: flex; height: 35px; margin-bottom: 10px; }
.frow-gap { margin-bottom: 20px; }
.frow-tight { margin-bottom: 5px; }
.frow-pre { margin-top: 15px; }
.frow-gap15 { margin-bottom: 14px; }
.lbl { width: 225px; flex: none; line-height: 28px; white-space: nowrap; }
.lbl-sub { padding-left: 18px; }
.lbl-sub sub { font-size: 11px; line-height: 0; }
.lbl-top { line-height: 19px; }
.sel { flex: 1; border-bottom: 1px solid #e2e2e2; display: flex; align-items: flex-start; justify-content: space-between; padding: 0 5px; line-height: 27px; }
.ch { width: 10px; height: 6px; margin-top: 11px; }
.fgroup { display: flex; align-items: center; height: 30px; margin-bottom: 13px; margin-top: -1px; font-weight: 700; color: #555; }
.ch-group { margin: 0 11px 0 0; }
.val { flex: 1; min-width: 0; border-bottom: 1px solid #e2e2e2; padding-left: 5px; line-height: 32px; font-size: 15.500px; }
.unit { flex: none; margin-left: 15px; border-bottom: 1px solid #e2e2e2; display: flex; align-items: flex-start; justify-content: flex-end; padding-right: 5px; line-height: 30px; font-size: 15px; }
.unit .ch { margin-left: 6px; }
.unit-m { width: 51px; }
.unit-pa { width: 43px; }
.unit-k { width: 59px; }
.unit-w { width: 47px; }
.tools { height: 35px; margin-bottom: 10px; display: flex; justify-content: flex-end; align-items: center; gap: 10px; }
.tgroup { display: flex; height: 35px; border: 1px solid #e4e4e4; border-radius: 5px; }
.tbtn { width: 34px; display: flex; align-items: center; justify-content: center; border-left: 1px solid #e4e4e4; }
.tbtn:first-child { border-left: 0; }
.tchart, .ttbl { width: 16px; height: 13px; }
.tsq { width: 17px; height: 14px; }
.reset { font-size: 14px; color: #0a7fae; }
.assigned { display: flex; align-items: center; height: 28px; gap: 4px; color: #555; white-space: nowrap; }
.assigned b { color: #444; }
.count { color: #777; }
.clear { margin-left: auto; font-size: 14px; color: #0a7fae; }
.sb-up-form { left: 424px; top: 6px; }
.sb-down-form { left: 424px; bottom: 5px; }
.sb-thumb-form { left: 425px; top: 19px; height: 563px; }
.panel-foot { height: 61px; flex: none; border-top: 1px solid #e6e6e6; padding: 10px 0 0 12px; }
.trash { width: 39px; height: 40px; border: 1px solid #e8e8e8; border-radius: 4px; display: flex; align-items: center; justify-content: center; }
.trash svg { width: 14px; height: 16px; }

/* ---------- viewport ---------- */
.view { flex: 1; min-width: 0; position: relative; }
.vtools { display: flex; gap: 7px; margin: 5px 0 0 181px; }
.vt { width: 47px; height: 47px; display: flex; align-items: center; justify-content: center; border: 1px solid transparent; border-radius: 4px; position: relative; }
.vt svg { width: 22px; height: 24px; }
.vt-on { border-color: #c5e3f0; background: #fff; }
.vt-corner::after { content: ""; position: absolute; right: 5px; bottom: 8px; width: 5px; height: 5px; border-right: 1px solid #999; border-bottom: 1px solid #999; }
.mesh {
  position: absolute; left: 0; top: 281px; width: 510px; height: 280px;
  background-color: #fff;
  background-image:
    linear-gradient(90deg, #2a2a2a 0 2px, transparent 2px),
    linear-gradient(180deg, #2a2a2a 0 1px, #777 1px 2px, transparent 2px);
  background-size: 7px 7px;
  border: 1px solid #111;
}
.scale { position: absolute; left: 53px; top: 815px; width: 280px; text-align: center; }
.scale-bar { display: block; height: 6px; border: 2px solid #333; border-top: 0; }
.scale-label { display: block; margin-top: 6px; font-size: 14px; color: #444; }

/* ---------- right panel ---------- */
.rpanel { width: 294px; flex: none; align-self: flex-start; background: #fff; border: 1px solid #e6e6e6; box-shadow: 0 3px 8px rgba(0,0,0,.07); }
.rsec { border-bottom: 1px solid #e6e6e6; }
.rsec-mesh { height: 124px; padding: 0 0 0 17px; position: relative; }
.rmesh-head { display: flex; align-items: center; height: 43px; font-weight: 700; color: #444; }
.ch-mesh { margin: 0 13px 0 0; }
.rtree-row { display: flex; align-items: center; height: 35px; color: #444; }
.rbox { width: 12px; height: 13px; border: 1px solid #e0e0e0; font-size: 11px; line-height: 10px; text-align: center; margin: 0 11px 0 0; }
.rtree-leaf { display: flex; align-items: center; height: 37px; padding-left: 56px; color: #555; position: relative; }
.rtree-leaf::before { content: ""; position: absolute; left: 39px; top: -4px; width: 6px; height: 22px; border-left: 1px solid #e4e4e4; border-bottom: 1px solid #e4e4e4; }
.rcube { width: 18px; height: 21px; margin-right: 9px; }
.rsec-row { height: 45px; display: flex; align-items: center; justify-content: space-between; padding: 0 15px 0 10px; }
.rsec-last { height: 46px; border-bottom: 0; padding-left: 15px; }
.rhead { font-weight: 700; color: #444; }
.rfaces { color: #555; }
.switch { width: 28px; height: 12px; background: #eee; border-radius: 6px; position: relative; }
.knob { position: absolute; left: -1px; top: -4px; width: 20px; height: 20px; background: #fff; border: 1px solid #ccc; border-radius: 50%; box-shadow: 0 1px 2px rgba(0,0,0,.2); }

/* ---------- overlays on the viewport ---------- */
.navcube { position: absolute; right: 14px; bottom: 5px; width: 200px; height: 210px; }
.nc-top { font: 400 14px Lato, sans-serif; fill: #9a9a9a; }
.nc-axis { font: 700 17px Lato, sans-serif; }
.nc-y { fill: #9fe89f; }
.nc-x { fill: #ff9d9d; }
.nc-z { fill: #a9a9ff; }
.chat { position: absolute; right: -1px; top: 529px; width: 85px; height: 100px; }
.chat-apps { position: absolute; right: 5px; top: 0; width: 45px; height: 45px; border-radius: 50%; background: #fff; display: flex; align-items: center; justify-content: center; box-shadow: 0 2px 10px rgba(0,0,0,.05); }
.chat-apps svg { width: 20px; height: 20px; }
.chat-blue { position: absolute; left: 0; top: 40px; width: 60px; height: 60px; border-radius: 50%; background: #0077a8; box-shadow: 0 5px 20px rgba(0,0,0,.2); }
.chat-bubble { position: absolute; left: 17px; top: 15px; width: 30px; height: 27px; background: #fff; border-radius: 3px; }
.chat-pill { position: absolute; left: 27px; top: 55px; width: 58px; height: 45px; background: #fff; border-radius: 23px 0 0 23px; display: flex; align-items: center; padding-left: 10px; box-shadow: 0 5px 15px rgba(0,0,0,.1); }
.chat-pill svg { width: 30px; height: 30px; }

/* ---------- windows taskbar ---------- */
.taskbar { margin-top: auto; height: 60px; flex: none; border-top: 1px solid #bdbdbd; display: flex; align-items: center; font-family: "Open Sans", sans-serif; font-size: 14px; color: #222; background: linear-gradient(90deg, #d8d8d8 0, #d9d9d9 290px, #f3e0c8 440px, #e0dad2 680px, #dadada 1500px, #f5e6cd 1640px, #ece3d2 1920px); }
.tb-weather { width: 530px; flex: none; display: flex; align-items: center; padding-left: 26px; position: relative; }
.wx { width: 29px; height: 37px; }
.wx-badge { position: absolute; left: 39px; top: -12px; width: 20px; height: 20px; border-radius: 50%; background: #c4261d; color: #fff; font-size: 13px; line-height: 20px; text-align: center; }
.wx-text { margin-left: 9px; display: flex; flex-direction: column; line-height: 20px; }
.wx-sub { color: #444; }
.tb-center { display: flex; align-items: center; flex: none; }
.tb-win { width: 29px; height: 29px; margin-right: 18px; }
.tb-search { width: 273px; height: 38px; background: #f6f2ee; border-radius: 19px; display: flex; align-items: center; padding-left: 14px; margin-right: 16px; }
.tb-search-ico { width: 19px; height: 19px; }
.tb-search-text { margin-left: 13px; font-size: 16px; color: #444; flex: 1; }
.tb-sax { width: 49px; height: 36px; margin-right: 11px; }
.tb-ico { width: 30px; height: 36px; margin-right: 25px; }
.tb-center > .tb-ico-last { margin-right: 13px; }
.tb-slot { width: 55px; height: 60px; display: flex; align-items: center; justify-content: center; position: relative; margin-right: 0; }
.tb-slot .tb-ico { margin: 0; }
.tb-slot-on::before { content: ""; position: absolute; left: 3px; top: 4px; width: 48px; height: 54px; background: rgba(255,255,255,.65); border-radius: 4px; }
.tb-slot-on .tb-ico { position: relative; }
.dot { position: absolute; left: 24px; bottom: 3px; width: 7px; height: 7px; border-radius: 50%; background: #777; }
.bar { position: absolute; left: 17px; bottom: 3px; width: 20px; height: 4px; border-radius: 2px; background: #0a78d0; }
.wa-badge { position: absolute; left: 25px; top: 4px; width: 26px; height: 26px; border-radius: 50%; background: #0a6fce; color: #fff; font-size: 13px; line-height: 26px; text-align: center; }
.zoomapp { width: 30px; height: 38px; background: #0b5cff; border-radius: 12px; color: #fff; font: 700 8px/38px "Noto Sans", sans-serif; text-align: center; }
.tb-tray { margin-left: auto; display: flex; align-items: center; padding-right: 26px; }
.tray-chev { width: 14px; height: 8px; margin-right: 24px; }
.tray-lang { display: flex; flex-direction: column; align-items: center; line-height: 20px; margin-right: 19px; width: 36px; }
.tray-wifi { width: 20px; height: 16px; margin-right: 12px; }
.tray-vol { width: 20px; height: 16px; margin-right: 15px; }
.tray-time { display: flex; flex-direction: column; align-items: flex-end; line-height: 20px; width: 80px; margin-right: 12px; }
.tray-bell { width: 17px; height: 22px; }
```
